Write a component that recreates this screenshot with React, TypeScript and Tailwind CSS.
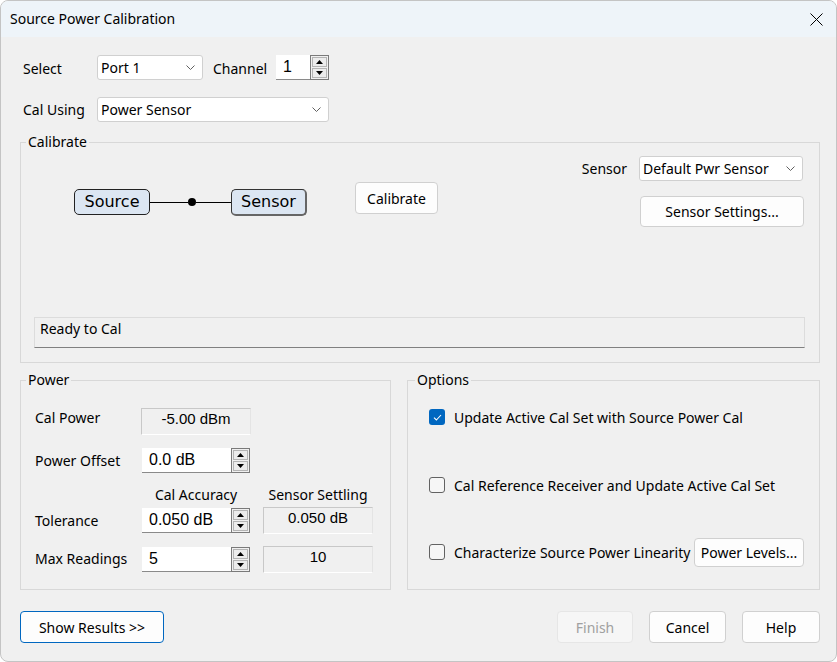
import React from "react";

const Chevron = () => (
  <svg width="9" height="5" viewBox="0 0 9 5" className="shrink-0">
    <polyline points="0.5,0.5 4.5,4.5 8.5,0.5" fill="none" stroke="#606060" strokeWidth="1" />
  </svg>
);

const Combo = ({ text, w }: { text: string; w: string }) => (
  <div className={`${w} h-[25px] flex items-center justify-between bg-white border border-[#d0d0d0] rounded-[3px] pl-[3px] pr-[7px]`}>
    <span className="leading-[20px]">{text}</span>
    <Chevron />
  </div>
);

const Spin = () => (
  <div className="w-[19px] h-[25px] border border-[#7a7a7a] bg-[#f0f0f0] flex flex-col p-[1px] gap-[1px] shrink-0">
    <div className="flex-1 border border-[#b4b4b4] bg-[#ececec] flex items-center justify-center">
      <svg width="7" height="4" viewBox="0 0 7 4"><polygon points="0,4 3.5,0 7,4" fill="#000" /></svg>
    </div>
    <div className="flex-1 border border-[#b4b4b4] bg-[#ececec] flex items-center justify-center">
      <svg width="7" height="4" viewBox="0 0 7 4"><polygon points="0,0 3.5,4 7,0" fill="#000" /></svg>
    </div>
  </div>
);

const NumInput = ({ text, w }: { text: string; w: string }) => (
  <div className="flex items-stretch h-[25px]">
    <div className={`${w} bg-white border-b border-[#8a8a8a] flex items-center pl-[7px] font-['Liberation_Sans',Arial,sans-serif] text-[16px]`}>
      {text}
    </div>
    <Spin />
  </div>
);

const ReadOnly = ({ text, h }: { text: string; h: string }) => (
  <div className={`w-[110px] ${h} border border-[#c8c8c8] border-b-white border-r-[#e4e4e4] bg-[#f0f0f0] flex justify-center font-['Liberation_Sans',Arial,sans-serif] text-[15px] leading-[20px]`}>
    {text}
  </div>
);

const Btn = ({ text, cls }: { text: string; cls: string }) => (
  <div className={`${cls} flex items-center justify-center bg-[#fdfdfd] border border-[#d0d0d0] rounded-[4px]`}>
    {text}
  </div>
);

const Check = ({ on }: { on: boolean }) =>
  on ? (
    <div className="w-[16px] h-[16px] rounded-[3px] bg-[#0067c0] flex items-center justify-center shrink-0">
      <svg width="9" height="7" viewBox="0 0 9 7">
        <polyline points="1,3.6 3.4,6 8,1" fill="none" stroke="#fff" strokeWidth="1.1" />
      </svg>
    </div>
  ) : (
    <div className="w-[16px] h-[16px] rounded-[3px] border border-[#626262] bg-[#f6f6f6] shrink-0" />
  );

export default function App() {
  return (
    <div className="w-[837px] h-[662px] overflow-hidden rounded-[8px] border border-[#c4c4c4] bg-[#f0f0f0] text-black text-[14px] font-['Noto_Sans','DejaVu_Sans',sans-serif]">
      {/* Title bar */}
      <div className="h-[36px] bg-[#eef4f9] flex items-center justify-between pl-[9px] pr-[13px]">
        <span className="leading-[20px]">Source Power Calibration</span>
        <svg width="13" height="13" viewBox="0 0 13 13">
          <line x1="0.5" y1="0.5" x2="12.5" y2="12.5" stroke="#000" strokeWidth="1" />
          <line x1="12.5" y1="0.5" x2="0.5" y2="12.5" stroke="#000" strokeWidth="1" />
        </svg>
      </div>

      {/* Body */}
      <div className="pl-[19px] pr-[16px] pt-[18px]">
        {/* Row 1 */}
        <div className="flex items-center h-[25px] pl-[3px]">
          <span className="w-[74px] pt-[1px]">Select</span>
          <Combo text="Port 1" w="w-[106px]" />
          <span className="ml-[10px] w-[63px] pt-[1px]">Channel</span>
          <NumInput text="1" w="w-[34px]" />
        </div>
        {/* Row 2 */}
        <div className="flex items-center h-[25px] mt-[17px] pl-[3px]">
          <span className="w-[74px]">Cal Using</span>
          <Combo text="Power Sensor" w="w-[232px]" />
        </div>

        {/* Calibrate group */}
        <fieldset className="mt-[11px] w-[800px] border border-[#d8d8d8]">
          <legend className="ml-[5px] px-[2px] leading-[18px]">Calibrate</legend>
          <div className="h-[211px] flex flex-col pl-[13px] pr-[14px] pb-[14px]">
            <div className="flex flex-1">
              <div className="pl-[40px] pt-[31px] flex items-start">
                <div className="mt-[7px] flex items-start font-['DejaVu_Sans',sans-serif] text-[16px]">
                  <div className="w-[76px] h-[26px] rounded-[5px] border border-[#222] bg-[#dce6f2] flex items-center justify-center">
                    Source
                  </div>
                  <div className="w-[81px] h-[26px] flex items-center">
                    <div className="w-[38px] h-px bg-black" />
                    <div className="w-[8px] h-[8px] rounded-full bg-black shrink-0" />
                    <div className="flex-1 h-px bg-black" />
                  </div>
                  <div className="w-[76px] h-[27px] rounded-[5px] border border-[#333] border-r-2 border-b-2 border-r-[#666] border-b-[#666] bg-[#dce6f2] flex items-center justify-center">
                    Sensor
                  </div>
                </div>
                <Btn text="Calibrate" cls="ml-[48px] w-[83px] h-[32px]" />
              </div>
              <div className="ml-auto pt-[5px] flex flex-col items-end">
                <div className="flex items-center mr-[2px]">
                  <span className="mr-[12px]">Sensor</span>
                  <Combo text="Default Pwr Sensor" w="w-[164px]" />
                </div>
                <Btn text="Sensor Settings..." cls="mt-[15px] mr-[1px] w-[164px] h-[31px]" />
              </div>
            </div>
            <div className="h-[31px] border border-[#dcdcdc] border-b-[#808080] bg-[#f0f0f0] pl-[5px] pt-[1px] leading-[20px]">
              Ready to Cal
            </div>
          </div>
        </fieldset>

        {/* Power & Options */}
        <div className="flex items-start gap-[16px] mt-[8px]">
          <fieldset className="w-[371px] h-[219px] border border-[#d8d8d8]">
            <legend className="ml-[5px] px-[2px] leading-[18px]">Power</legend>
            <div className="pl-[14px]">
              <div className="mt-[19px] flex items-start h-[27px]">
                <span className="w-[106px] leading-[20px]">Cal Power</span>
                <ReadOnly text="-5.00 dBm" h="h-[27px]" />
              </div>
              <div className="mt-[13px] flex items-center h-[25px]">
                <span className="w-[107px]">Power Offset</span>
                <NumInput text="0.0 dB" w="w-[89px]" />
              </div>
              <div className="mt-[11px] flex items-center h-[20px]">
                <span className="w-[107px]" />
                <span className="w-[108px] text-center">Cal Accuracy</span>
                <span className="ml-[13px] w-[110px] text-center">Sensor Settling</span>
              </div>
              <div className="mt-[3px] flex items-center h-[26px]">
                <span className="w-[107px]">Tolerance</span>
                <NumInput text="0.050 dB" w="w-[89px]" />
                <div className="ml-[13px]">
                  <ReadOnly text="0.050 dB" h="h-[27px]" />
                </div>
              </div>
              <div className="mt-[13px] flex items-center h-[26px]">
                <span className="w-[107px] pb-[1px]">Max Readings</span>
                <NumInput text="5" w="w-[89px]" />
                <div className="ml-[13px]">
                  <ReadOnly text="10" h="h-[27px]" />
                </div>
              </div>
            </div>
          </fieldset>

          <fieldset className="w-[413px] h-[219px] border border-[#d8d8d8]">
            <legend className="ml-[7px] px-[2px] leading-[18px]">Options</legend>
            <div className="pl-[21px] pr-[15px]">
              <div className="mt-[13px] h-[30px] flex items-center">
                <Check on />
                <span className="ml-[9px]">Update Active Cal Set with Source Power Cal</span>
              </div>
              <div className="mt-[38px] h-[30px] flex items-center">
                <Check on={false} />
                <span className="ml-[9px]">Cal Reference Receiver and Update Active Cal Set</span>
              </div>
              <div className="mt-[37px] h-[30px] flex items-center">
                <Check on={false} />
                <span className="ml-[9px] whitespace-nowrap">Characterize Source Power Linearity</span>
                <Btn text="Power Levels..." cls="ml-auto w-[110px] h-[29px] shrink-0" />
              </div>
            </div>
          </fieldset>
        </div>

        {/* Bottom buttons */}
        <div className="mt-[21px] flex items-center">
          <div className="w-[144px] h-[32px] flex items-center justify-center bg-[#fdfdfd] border border-[#0067c0] rounded-[4px]">
            Show Results &gt;&gt;
          </div>
          <div className="ml-auto w-[76px] h-[32px] flex items-center justify-center bg-[#f6f6f6] border border-[#e6e6e6] rounded-[4px] text-[#a0a0a0]">
            Finish
          </div>
          <Btn text="Cancel" cls="ml-[16px] w-[77px] h-[32px]" />
          <Btn text="Help" cls="ml-[16px] w-[78px] h-[32px]" />
        </div>
      </div>
    </div>
  );
}
